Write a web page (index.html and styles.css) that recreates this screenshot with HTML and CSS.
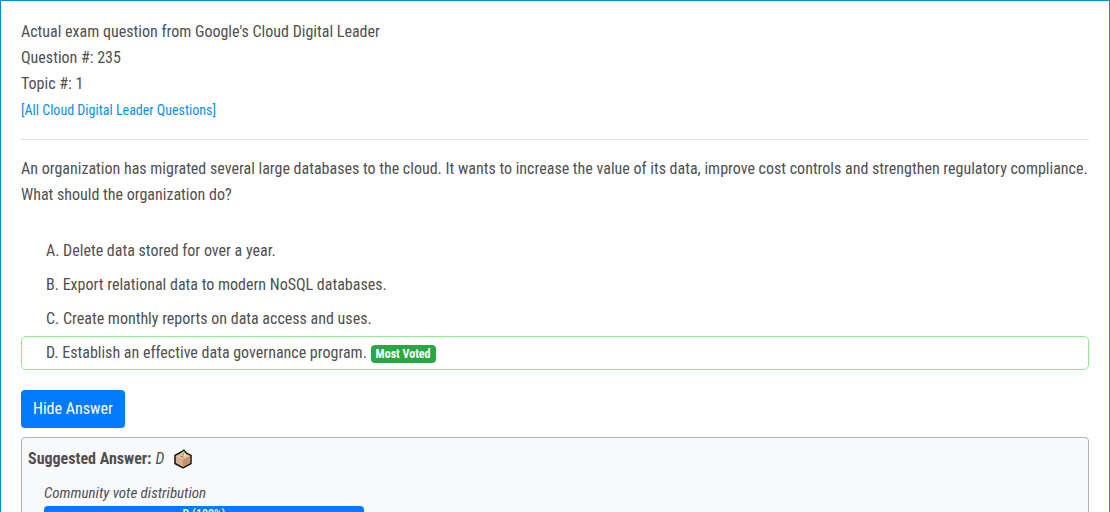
FILE: index.html
```html
<!DOCTYPE html>
<html lang="en">
<head>
<meta charset="utf-8">
<meta name="viewport" content="width=device-width, initial-scale=1">
<title>Cloud Digital Leader - Question 235</title>
<link rel="stylesheet" href="styles.css">
</head>
<body>
<main class="discussion">
  <header class="question-header">
    <div>Actual exam question from Google's Cloud Digital Leader</div>
    <div>Question #: 235</div>
    <div>Topic #: 1</div>
    <a class="all-questions" href="#">[All Cloud Digital Leader Questions]</a>
  </header>
  <section class="question-body">
    <p class="question-text">An organization has migrated several large databases to the cloud. It wants to increase the value of its data, improve cost controls and strengthen regulatory compliance.<br>What should the organization do?</p>
    <ul class="choices">
      <li class="choice">A. Delete data stored for over a year.</li>
      <li class="choice">B. Export relational data to modern NoSQL databases.</li>
      <li class="choice">C. Create monthly reports on data access and uses.</li>
      <li class="choice choice-voted">D. Establish an effective data governance program. <span class="badge">Most Voted</span></li>
    </ul>
    <button class="answer-toggle" type="button">Hide Answer</button>
  </section>
  <section class="answer">
    <div class="suggested">
      <strong>Suggested Answer:</strong>
      <em>D</em>
      <svg class="ballot" viewBox="0 0 20 20" aria-hidden="true">
        <path fill="#d9ae8c" stroke="#111" stroke-width="1.5" stroke-linejoin="round" d="M2 6.5 8.5 3 11 1.2 13 4 18 6.5V14.5L10 18.8 2 14.5Z"/>
        <path fill="#e6c3a5" d="M2.8 6.9 10 3.4 17.2 6.9 10 10.5Z"/>
        <path fill="#c1926d" d="M10 10.5 17.2 6.9V14L10 17.9Z"/>
        <path fill="#f4f8e9" d="M7.4 4.8 10.8 2.2 13 5.4 10.3 7Z"/>
        <path fill="none" stroke="#72c83c" stroke-width="1.5" d="M8.8 4.6 10.2 5.8 11.4 2.6"/>
        <path fill="none" stroke="#8a6348" d="M7.6 7 10.4 8.3"/>
      </svg>
    </div>
    <div class="votes">
      <div class="votes-title">Community vote distribution</div>
      <div class="vote-bar">D (100%)</div>
    </div>
  </section>
</main>
</body>
</html>
```
FILE: styles.css
```css
* {
  box-sizing: border-box;
}

body {
  margin: 0;
  font-family: "Roboto Condensed", Roboto, sans-serif;
  font-size: 16px;
  line-height: 26px;
  color: #505050;
  background: #fff;
}

.discussion {
  height: 100vh;
  overflow: hidden;
  padding: 18px 20px 0;
  border: 1px solid #0090e3;
  border-bottom: 0;
}

.question-header {
  padding-bottom: 16px;
  border-bottom: 1px solid #dfdfdf;
}

.all-questions {
  display: block;
  width: fit-content;
  font-size: 14px;
  color: #0a90ea;
  text-decoration: none;
}

.question-body {
  padding-top: 16px;
}

.question-text {
  margin: 0 0 26px;
}

.choices {
  margin: 0 0 20px;
  padding: 0;
  list-style: none;
}

.choice {
  padding: 3px 24px;
  border: 1px solid transparent;
  border-radius: 5px;
}

.choice-voted {
  border-color: #90ee90;
}

.badge {
  display: inline-block;
  padding: 3px 5px;
  border-radius: 4px;
  font-size: 12px;
  font-weight: 700;
  line-height: 12px;
  color: #fff;
  background: #28a745;
}

.answer-toggle {
  display: block;
  padding: 6px 12px;
  border: 0;
  border-radius: 4px;
  font: inherit;
  line-height: 26px;
  color: #fff;
  background: #007bff;
}

.answer {
  margin-top: 9px;
  padding: 8px 6px;
  border: 1px solid #b3b3b3;
  border-radius: 4px;
  background: #f8f9fb;
}

.suggested {
  display: flex;
  align-items: center;
  gap: 4px;
}

.ballot {
  width: 20px;
  height: 20px;
  margin-left: 5px;
}

.votes {
  width: 336px;
  padding: 8px 0 16px 16px;
}

.votes-title {
  font-size: 15px;
  font-style: italic;
}

.vote-bar {
  border-radius: 4px;
  font-size: 12px;
  font-weight: 500;
  line-height: 16px;
  text-align: center;
  color: #fff;
  background: #007bff;
}
```
